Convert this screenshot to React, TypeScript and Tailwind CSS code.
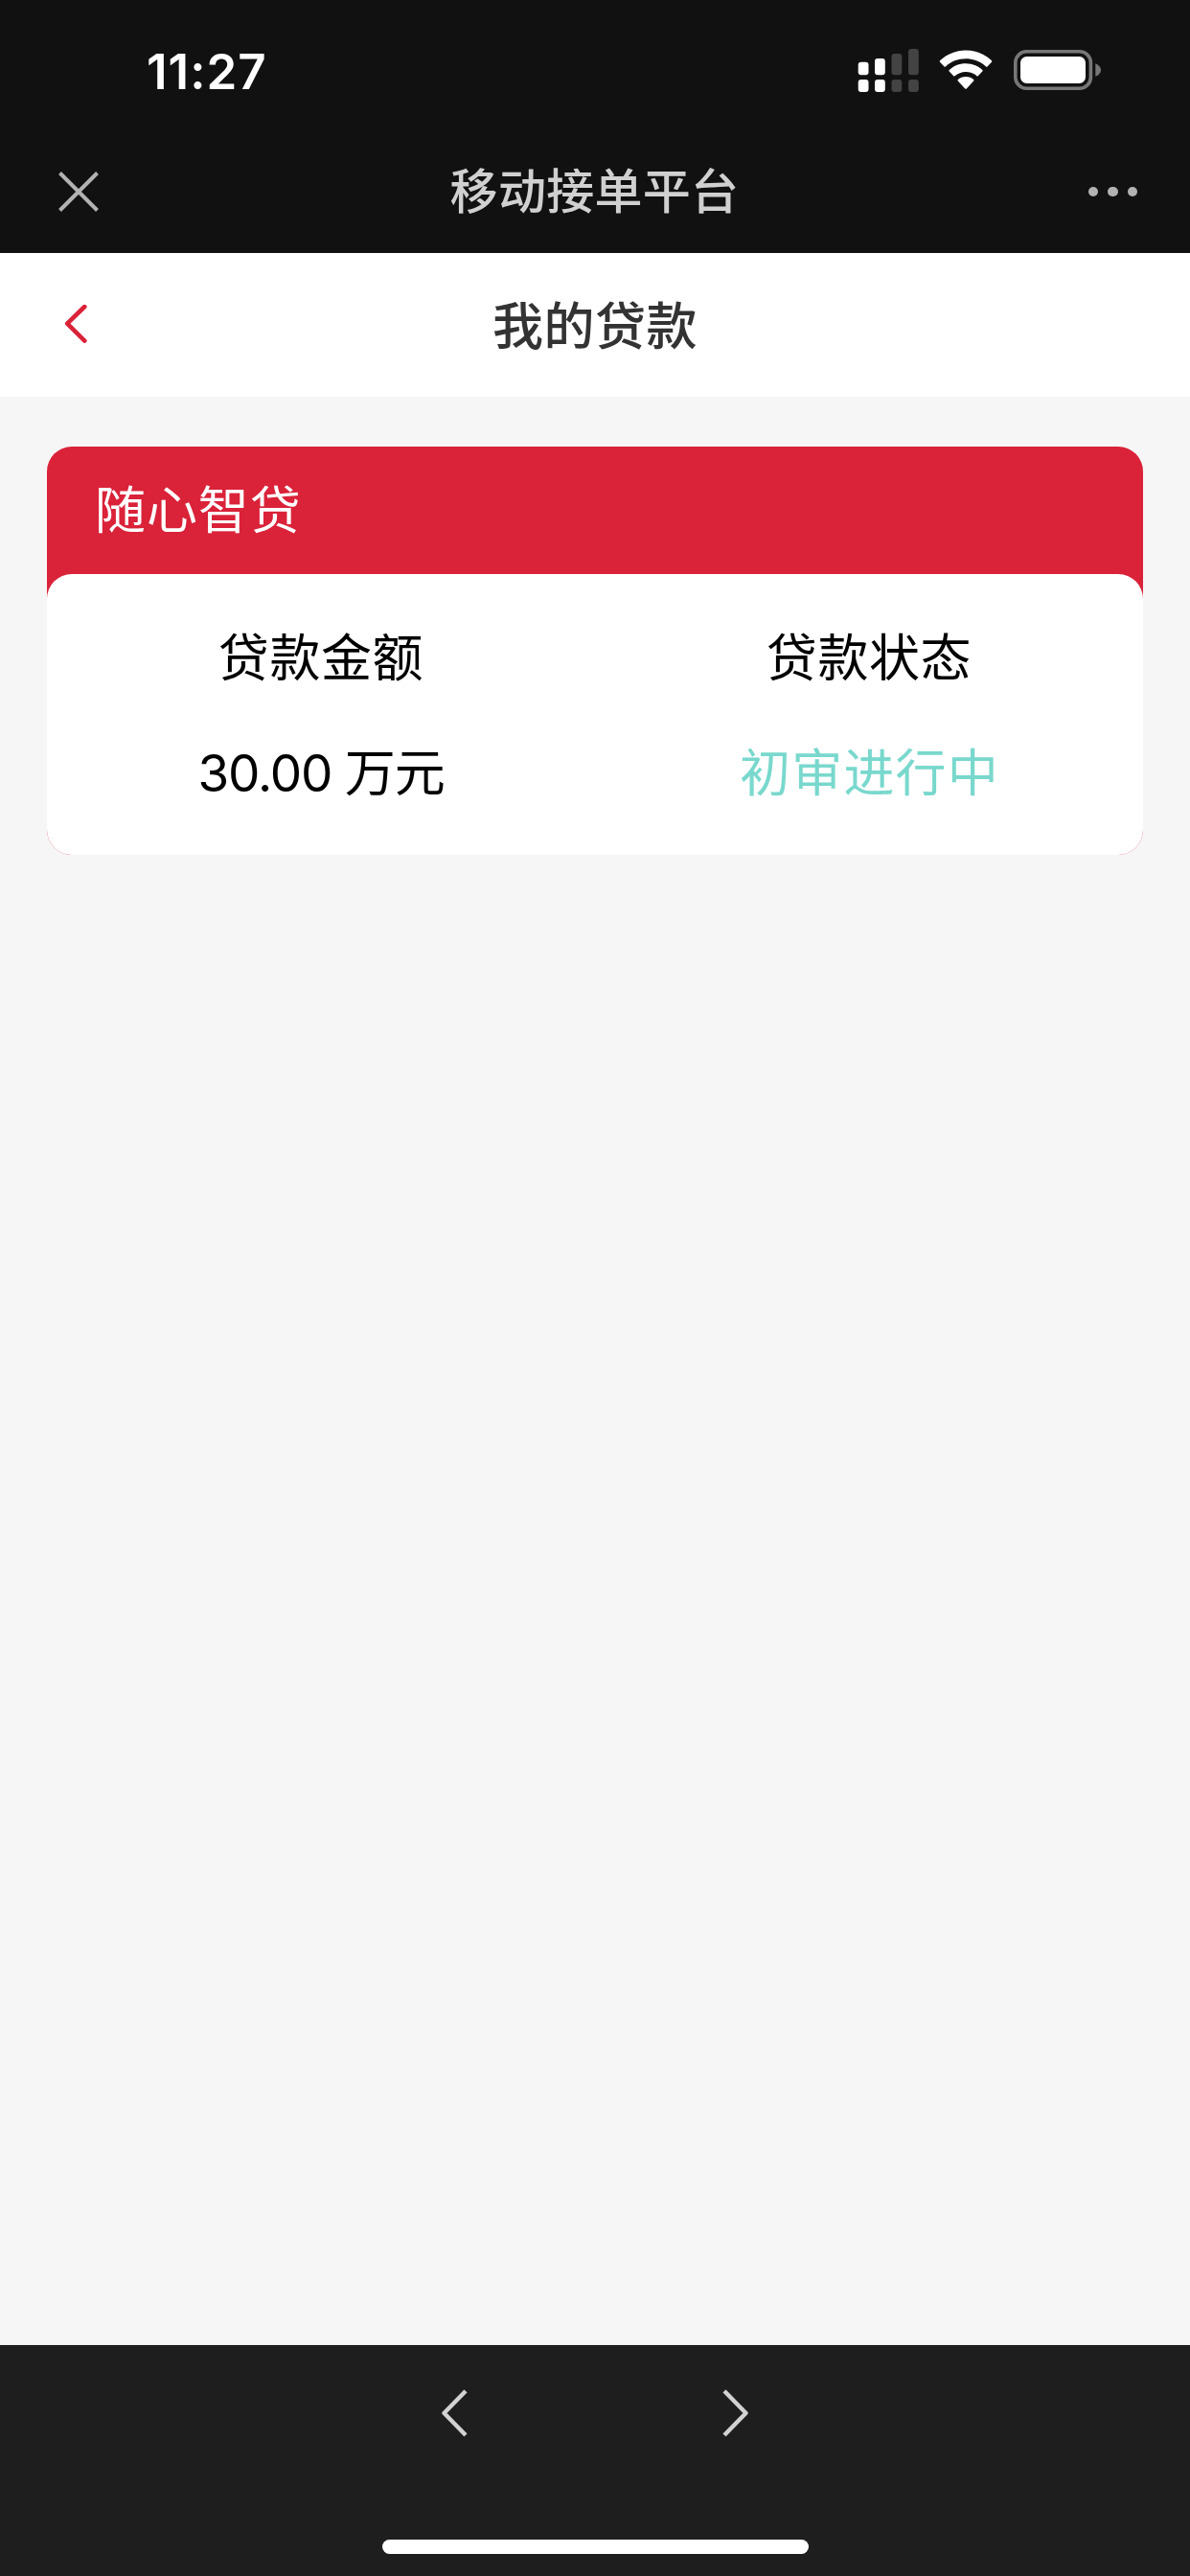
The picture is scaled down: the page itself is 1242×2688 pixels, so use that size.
import type { ReactNode } from "react"

const loan = {
  product: "随心智贷",
  fields: [
    { label: "贷款金额", value: "30.00 万元", valueClass: "text-black tracking-[-1.2px]" },
    { label: "贷款状态", value: "初审进行中", valueClass: "text-[#79d8cd] tracking-[1.2px] pl-px" },
  ],
}

const SignalIcon = () => (
  <svg width="64" height="45" viewBox="0 0 64 45" fill="#fff">
    <rect x="0.7" y="13.7" width="10.8" height="13.6" rx="3" />
    <rect x="0.7" y="32" width="10.8" height="13" rx="3" />
    <rect x="18" y="10" width="10.8" height="17.3" rx="3" />
    <rect x="18" y="32" width="10.8" height="13" rx="3" />
    <g fill="#434343">
      <rect x="35.5" y="5" width="10.8" height="22.3" rx="3" />
      <rect x="35.5" y="32" width="10.8" height="13" rx="3" />
      <rect x="53" y="0" width="10.8" height="27.3" rx="3" />
      <rect x="53" y="32" width="10.8" height="13" rx="3" />
    </g>
  </svg>
)

const WifiIcon = () => (
  <svg width="56" height="42" viewBox="0 0 56 42" fill="#fff">
    <path d="M28 0.5C38.6 0.5 48 4.6 55 11.3Q55.6 12 55 12.7L50.5 17.4Q49.8 18 49.1 17.4C43.5 12.2 36.2 9.3 28 9.3S12.5 12.2 6.9 17.4Q6.2 18 5.5 17.4L1 12.7Q0.4 12 1 11.3C8 4.6 17.4 0.5 28 0.5Z" />
    <path d="M28 14.2C35 14.2 41 16.9 45.3 21.1Q46 21.8 45.3 22.5L40.8 27.2Q40.1 27.9 39.4 27.2C36.4 24.5 32.4 22.9 28 22.9S19.6 24.5 16.6 27.2Q15.9 27.9 15.2 27.2L10.7 22.5Q10 21.8 10.7 21.1C15 16.9 21 14.2 28 14.2Z" />
    <path d="M28 28C31.2 28 34.1 29.2 36.2 31.1Q36.9 31.8 36.2 32.5L28.8 40.4Q28 41.2 27.2 40.4L19.8 32.5Q19.1 31.8 19.8 31.1C21.9 29.2 24.8 28 28 28Z" />
  </svg>
)

const BatteryIcon = () => (
  <svg width="92" height="42" viewBox="0 0 92 42" fill="none">
    <rect x="1.8" y="1.8" width="78.6" height="38.4" rx="11.5" stroke="#777" strokeWidth="3.6" />
    <rect x="7" y="7" width="68" height="28" rx="6.5" fill="#fff" />
    <path d="M85.3 14.2C88.5 15.4 91 18 91 21S88.5 26.6 85.3 27.8Z" fill="#777" />
  </svg>
)

const StatusBar = () => (
  <div className="flex h-[132px] items-start justify-between bg-[#111] pl-[153px] pr-[92px]">
    <span className="mt-[44px] font-['Inter'] text-[51px] leading-[62px] font-semibold text-white tracking-[1px]">
      11:27
    </span>
    <div className="mt-[51px] flex items-start">
      <SignalIcon />
      <div className="ml-[21px] mt-px"><WifiIcon /></div>
      <div className="ml-[22px] mt-px"><BatteryIcon /></div>
    </div>
  </div>
)

const NavBar = () => (
  <div className="flex h-[132px] items-center justify-between bg-[#111] pl-[61px] pr-[55px] pt-[4px]">
    <button type="button" aria-label="关闭" className="w-[72px]">
      <svg width="42" height="42" viewBox="0 0 42 42" stroke="#b2b2b2" strokeWidth="4">
        <path d="M1.5 1.5L40.5 40.5M40.5 1.5L1.5 40.5" />
      </svg>
    </button>
    <h1 className="-ml-[7px] text-[50px] leading-[72px] font-medium tracking-[0.3px] text-[#d0d0d0]">移动接单平台</h1>
    <button type="button" aria-label="更多" className="flex w-[72px] justify-end gap-[10px]">
      <span className="size-[10.4px] rounded-full bg-[#b2b2b2]" />
      <span className="size-[10.4px] rounded-full bg-[#b2b2b2]" />
      <span className="size-[10.4px] rounded-full bg-[#b2b2b2]" />
    </button>
  </div>
)

const PageHeader = () => (
  <div className="flex h-[150px] items-center justify-between bg-white px-[66px]">
    <button type="button" aria-label="返回" className="w-[72px]">
      <svg width="26" height="42" viewBox="0 0 26 42" fill="none" stroke="#da2239" strokeWidth="4.6" strokeLinecap="round" strokeLinejoin="round">
        <path d="M22.3 2L4.2 19.7L22.3 37.7" />
      </svg>
    </button>
    <h2 className="pt-[3px] text-[53px] leading-[76px] font-medium tracking-[0.5px] text-[#333]">我的贷款</h2>
    <div className="w-[72px]" />
  </div>
)

const Card = ({ title, children }: { title: string; children: ReactNode }) => (
  <div className="rounded-[26px] bg-[#da2239]">
    <div className="h-[133px] pl-[50px] pt-[29px] text-[53px] leading-[76px] tracking-[0.9px] text-white">{title}</div>
    <div className="grid h-[293px] grid-cols-2 rounded-[26px] bg-white">{children}</div>
  </div>
)

const Toolbar = () => (
  <div className="flex h-[241px] flex-col items-center justify-between bg-[#1e1e1e] pt-[46px] pb-[23px]">
    <div className="flex w-[322px] justify-between">
      <button type="button" aria-label="后退">
        <svg width="28" height="50" viewBox="0 0 28 50" fill="none" stroke="#d2d2d2" strokeWidth="4.4">
          <path d="M26 2L3.5 25L26 48" strokeLinejoin="round" />
        </svg>
      </button>
      <button type="button" aria-label="前进">
        <svg width="28" height="50" viewBox="0 0 28 50" fill="none" stroke="#d2d2d2" strokeWidth="4.4">
          <path d="M2 2L24.5 25L2 48" strokeLinejoin="round" />
        </svg>
      </button>
    </div>
    <div className="h-[15px] w-[445px] rounded-full bg-white" />
  </div>
)

const App = () => {
  return (
    <div className="flex h-[2688px] w-[1242px] flex-col bg-[#f6f6f6] font-['Inter','Noto_Sans_CJK_SC',sans-serif]">
      <StatusBar />
      <NavBar />
      <PageHeader />
      <main className="flex-1 px-[49px] pt-[52px]">
        <Card title={loan.product}>
          {loan.fields.map((field) => (
            <div key={field.label} className="flex flex-col items-center gap-[44px] pt-[50px] text-[53px] leading-[76px]">
              <span className="tracking-[0.6px] text-black">{field.label}</span>
              <span className={field.valueClass}>{field.value}</span>
            </div>
          ))}
        </Card>
      </main>
      <Toolbar />
    </div>
  )
}

export default App
